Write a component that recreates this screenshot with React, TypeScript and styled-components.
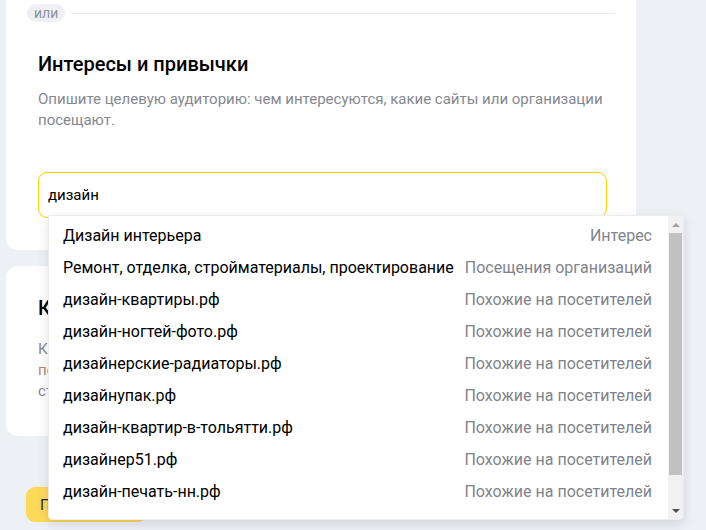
import React from 'react';
import styled, { createGlobalStyle } from 'styled-components';

const GlobalStyle = createGlobalStyle`
  html, body {
    margin: 0;
    padding: 0;
    background: #edf0f5;
    font-family: Roboto, "Liberation Sans", Arial, sans-serif;
    overflow: hidden;
  }
`;

interface Suggestion {
  title: string;
  kind: string;
}

const suggestions: Suggestion[] = [
  { title: 'Дизайн интерьера', kind: 'Интерес' },
  { title: 'Ремонт, отделка, стройматериалы, проектирование', kind: 'Посещения организаций' },
  { title: 'дизайн-квартиры.рф', kind: 'Похожие на посетителей' },
  { title: 'дизайн-ногтей-фото.рф', kind: 'Похожие на посетителей' },
  { title: 'дизайнерские-радиаторы.рф', kind: 'Похожие на посетителей' },
  { title: 'дизайнупак.рф', kind: 'Похожие на посетителей' },
  { title: 'дизайн-квартир-в-тольятти.рф', kind: 'Похожие на посетителей' },
  { title: 'дизайнер51.рф', kind: 'Похожие на посетителей' },
  { title: 'дизайн-печать-нн.рф', kind: 'Похожие на посетителей' },
];

const Page = styled.div`
  position: relative;
  width: 706px;
  height: 530px;
  padding-left: 6px;
  box-sizing: border-box;
  display: flex;
  flex-direction: column;
  gap: 16px;
`;

const Card = styled.section<{ $top?: boolean }>`
  width: 630px;
  box-sizing: border-box;
  background: #fff;
  border-radius: 12px;
  padding: ${(p) => (p.$top ? '24px 29px 32px 32px' : '28px 29px 34px 32px')};
  margin-top: ${(p) => (p.$top ? '-20px' : '0')};
  display: flex;
  flex-direction: column;
`;

const OrRow = styled.div`
  display: flex;
  align-items: center;
  gap: 6px;
  margin: 0 -8px 0 -11px;
`;

const OrChip = styled.span`
  height: 18px;
  padding: 0 7px;
  border-radius: 9px;
  background: #eef0f4;
  color: #8d9097;
  font-size: 14px;
  line-height: 18px;
`;

const OrLine = styled.div`
  flex: 1;
  height: 1px;
  background: #e7e9ee;
`;

const Title = styled.h2<{ $first?: boolean }>`
  margin: ${(p) => (p.$first ? '0' : '28px 0 0')};
  font-size: 20px;
  font-weight: 500;
  line-height: 28px;
  color: #000;
`;

const Description = styled.p<{ $gap?: number }>`
  margin: ${(p) => p.$gap ?? 11}px 0 0;
  font-size: 15px;
  line-height: 21px;
  color: #858891;
`;

const Link = styled.span`
  color: #b7846a;
`;

const Input = styled.div`
  margin-top: 41px;
  height: 46px;
  box-sizing: border-box;
  border: 1px solid #ffcc00;
  border-radius: 9px;
  padding: 0 9px;
  display: flex;
  align-items: center;
  font-size: 15px;
  color: #000;
`;

const Button = styled.button`
  margin: 35px 0 0 20px;
  width: 121px;
  height: 35px;
  flex-shrink: 0;
  border: none;
  border-radius: 9px;
  background: #fdd95a;
  color: #2b2b2b;
  font-family: inherit;
  font-size: 15px;
  text-align: left;
  padding: 0 14px;
`;

const Dropdown = styled.div`
  position: absolute;
  left: 48px;
  top: 215px;
  width: 636px;
  height: 305px;
  box-sizing: border-box;
  background: #fff;
  border: 1px solid #ececec;
  border-radius: 0 0 4px 4px;
  box-shadow: 0 4px 12px rgba(0, 0, 0, 0.12);
  display: flex;
`;

const List = styled.ul`
  flex: 1;
  margin: 0;
  padding: 3px 16px 0 14px;
  list-style: none;
`;

const Row = styled.li`
  height: 32px;
  display: flex;
  align-items: center;
  justify-content: space-between;
  font-size: 16px;
`;

const RowTitle = styled.span`
  color: #000;
  white-space: nowrap;
`;

const RowKind = styled.span`
  color: #81848b;
  white-space: nowrap;
`;

const Scrollbar = styled.div`
  width: 15px;
  background: #f1f1f1;
  display: flex;
  flex-direction: column;
  align-items: center;
`;

const Arrow = styled.div<{ $down?: boolean }>`
  height: 17px;
  display: flex;
  align-items: center;
  justify-content: center;
  &::before {
    content: '';
    border-left: 4px solid transparent;
    border-right: 4px solid transparent;
    ${(p) =>
      p.$down
        ? 'border-top: 4px solid #505050;'
        : 'border-bottom: 4px solid #a3a3a3;'}
  }
`;

const Track = styled.div`
  flex: 1;
  display: flex;
  flex-direction: column;
  align-items: center;
`;

const Thumb = styled.div`
  width: 13px;
  height: 242px;
  background: #c1c1c1;
`;

export default function App(): React.ReactElement {
  return (
    <>
      <GlobalStyle />
      <Page>
        <Card $top>
          <OrRow>
            <OrChip>или</OrChip>
            <OrLine />
          </OrRow>
          <Title>Интересы и привычки</Title>
          <Description>
            Опишите целевую аудиторию: чем интересуются, какие сайты или организации
            посещают.
          </Description>
          <Input>дизайн</Input>
        </Card>
        <Card>
          <Title $first>Ключевые фразы</Title>
          <Description $gap={17}>
            Какие запросы вводят в поиске ваши потенциальные клиенты. Мы подберём
            <br />
            <Link>подробнее</Link> о подборе фраз и о том, как они влияют на
            <br />
            стоимость показа объявлений
          </Description>
        </Card>
        <Button>Продолжить</Button>
        <Dropdown>
          <List>
            {suggestions.map((s) => (
              <Row key={s.title}>
                <RowTitle>{s.title}</RowTitle>
                <RowKind>{s.kind}</RowKind>
              </Row>
            ))}
          </List>
          <Scrollbar>
            <Arrow />
            <Track>
              <Thumb />
            </Track>
            <Arrow $down />
          </Scrollbar>
        </Dropdown>
      </Page>
    </>
  );
}
